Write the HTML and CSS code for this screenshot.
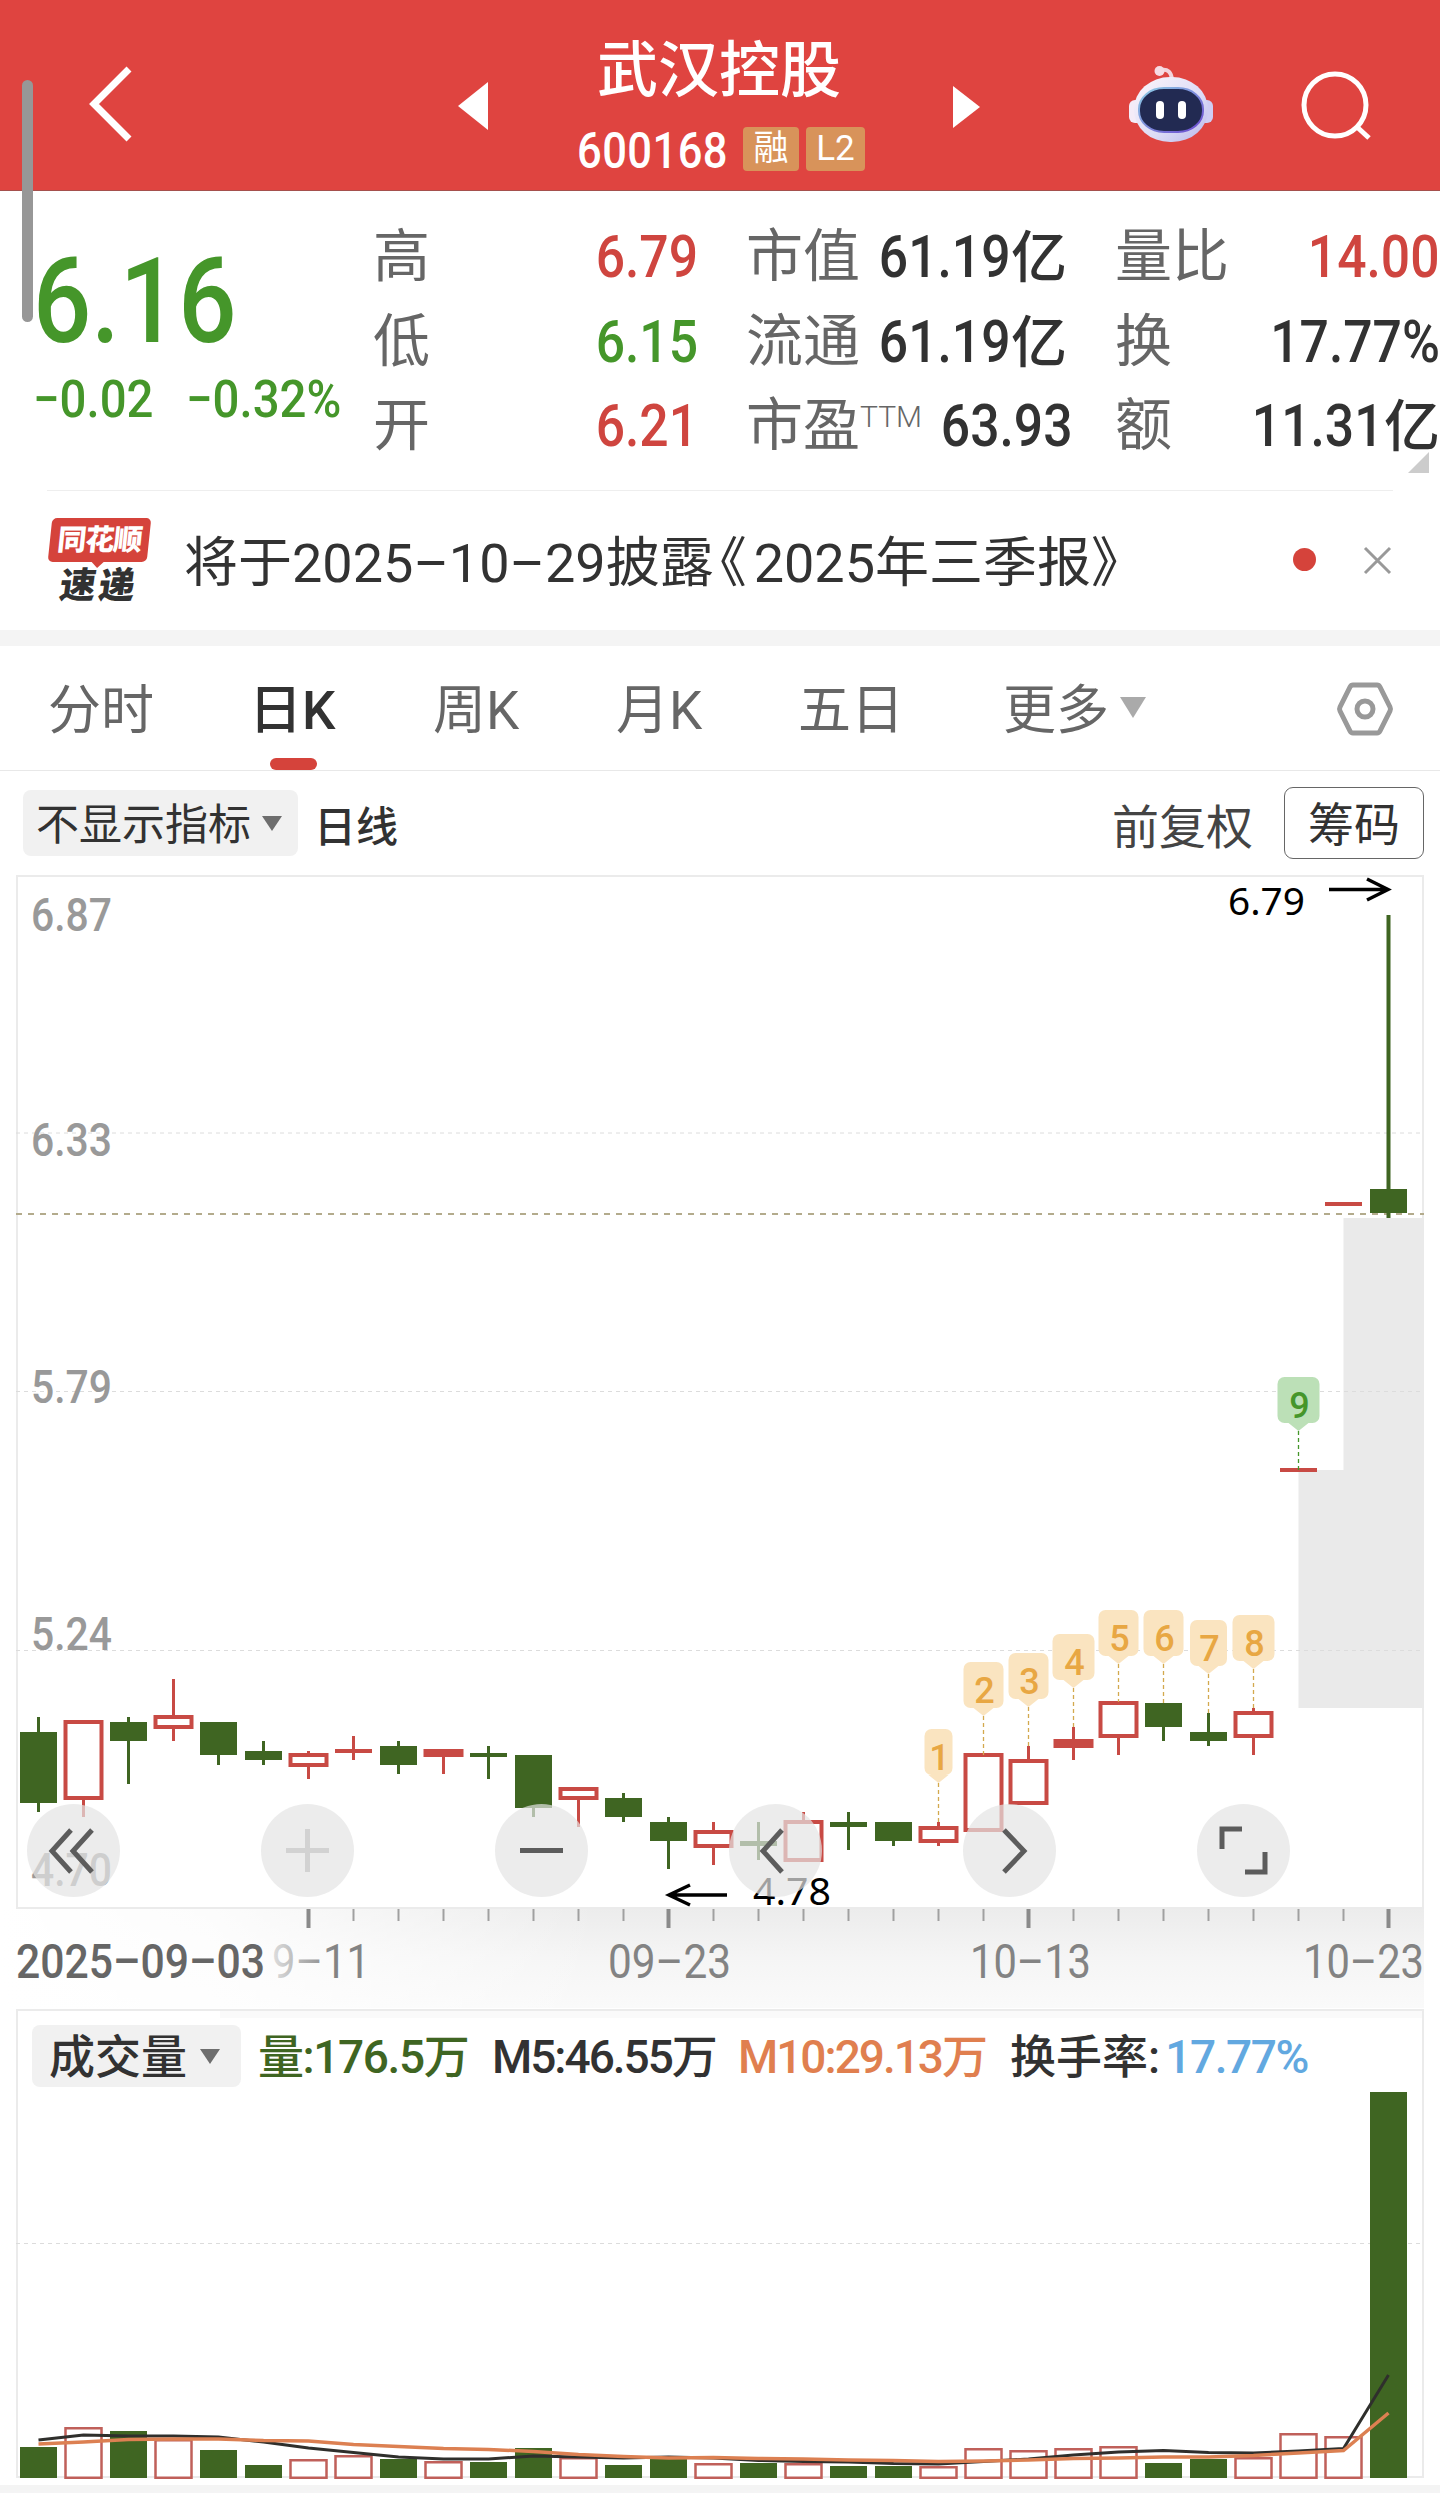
FILE: index.html
```html
<!DOCTYPE html>
<html lang="zh-CN">
<head>
  <meta charset="UTF-8">
  <meta name="viewport" content="width=device-width, initial-scale=1.0">
  <title>武汉控股 600168</title>
  <link rel="stylesheet" href="styles.css">
</head>
<body>
  <div class="scrollbar"></div>

  <header class="topbar">
    <svg class="back" width="60" height="86" viewBox="0 0 60 86"><path d="M49 8 L14 43 L49 78" fill="none" stroke="#fff" stroke-width="7"/></svg>
    <svg class="prev" width="32" height="50" viewBox="0 0 32 50"><path d="M31 1 V49 L1 25 Z" fill="#fff"/></svg>
    <div class="stock">
      <h1>武汉控股</h1>
      <div class="code-row">
        <span class="code">600168</span>
        <span class="badge">融</span>
        <span class="badge badge-l2">L2</span>
      </div>
    </div>
    <svg class="next" width="30" height="44" viewBox="0 0 30 44"><path d="M1 1 V43 L28 22 Z" fill="#fff"/></svg>
    <svg class="robot" width="86" height="80" viewBox="0 0 86 80">
      <defs>
        <linearGradient id="head" x1="0" y1="0" x2="1" y2="1">
          <stop offset="0" stop-color="#fdf6fb"/>
          <stop offset="0.6" stop-color="#dcdcf6"/>
          <stop offset="1" stop-color="#b9b6ea"/>
        </linearGradient>
        <linearGradient id="rim" x1="0" y1="0" x2="1" y2="1">
          <stop offset="0" stop-color="#8fd0e6"/>
          <stop offset="1" stop-color="#6a45cf"/>
        </linearGradient>
      </defs>
      <path d="M33 6 Q43 4 44 16" fill="none" stroke="#f3d3dc" stroke-width="4"/>
      <circle cx="31.500" cy="7" r="5" fill="#f6dbe3"/>
      <rect x="1" y="36" width="14" height="23" rx="6" fill="#f4ecf8"/>
      <rect x="71" y="36" width="14" height="23" rx="6" fill="#cfcdf3"/>
      <rect x="6" y="13" width="74" height="65" rx="36" ry="32" fill="url(#head)"/>
      <rect x="11" y="24" width="64" height="44" rx="25" ry="21" fill="#222a52" stroke="url(#rim)" stroke-width="2"/>
      <rect x="28" y="37" width="8" height="18" rx="4" fill="#fff"/>
      <rect x="50" y="37" width="8" height="18" rx="4" fill="#fff"/>
    </svg>
    <svg class="search" width="76" height="76" viewBox="0 0 76 76"><circle cx="36" cy="36" r="31" fill="none" stroke="#fff" stroke-width="5"/><path d="M58 58 L70 69" stroke="#fff" stroke-width="5"/></svg>
  </header>

  <section class="quote">
    <div class="price">
      <div class="last"><span>6.16</span></div>
      <div class="change"><span>−0.02</span><span>−0.32%</span></div>
    </div>
    <dl class="stats stats-a">
      <div><dt>高</dt><dd class="up"><span>6.79</span></dd></div>
      <div><dt>低</dt><dd class="down"><span>6.15</span></dd></div>
      <div><dt>开</dt><dd class="up"><span>6.21</span></dd></div>
    </dl>
    <dl class="stats stats-b">
      <div><dt>市值</dt><dd><span>61.19</span>亿</dd></div>
      <div><dt>流通</dt><dd><span>61.19</span>亿</dd></div>
      <div><dt>市盈<sup>TTM</sup></dt><dd class="plain"><span>63.93</span></dd></div>
    </dl>
    <dl class="stats stats-c">
      <div><dt>量比</dt><dd class="up"><span>14.00</span></dd></div>
      <div><dt>换</dt><dd><span>17.77%</span></dd></div>
      <div><dt>额</dt><dd><span>11.31</span>亿</dd></div>
    </dl>
    <div class="corner"></div>
  </section>

  <section class="news">
    <div class="news-logo">
      <div class="logo-top">同花顺</div>
      <div class="logo-bottom">速递</div>
    </div>
    <p>将于2025–10–29披露<span class="open-mark">《</span>2025年三季报》</p>
    <span class="dot"></span>
    <svg class="close" width="29" height="29" viewBox="0 0 29 29"><path d="M2 2 L27 27 M27 2 L2 27" stroke="#999" stroke-width="3"/></svg>
  </section>

  <nav class="tabs">
    <a>分时</a>
    <a class="active">日K</a>
    <a>周K</a>
    <a>月K</a>
    <a>五日</a>
    <a class="more">更多</a>
    <i class="caret caret-light"></i>
    <svg class="gear" width="58" height="56" viewBox="0 0 58 56"><path d="M17 4 H41 Q43 4 44 6 L54 26 Q55 28 54 30 L44 50 Q43 52 41 52 H17 Q15 52 14 50 L4 30 Q3 28 4 26 L14 6 Q15 4 17 4 Z" fill="none" stroke="#999" stroke-width="5"/><circle cx="29" cy="28" r="8" fill="none" stroke="#999" stroke-width="5"/></svg>
  </nav>

  <div class="toolbar">
    <div class="chip">不显示指标<i class="caret"></i></div>
    <b>日线</b>
    <span class="adjust">前复权</span>
    <button>筹码</button>
  </div>

  <svg id="kline" width="1440" height="1138" viewBox="0 870 1440 1138"></svg>

  <section class="volume">
    <div class="volume-head">
      <div class="chip">成交量<i class="caret"></i></div>
      <span class="v-now">量:176.5万</span>
      <span class="v-m5">M5:46.55万</span>
      <span class="v-m10">M10:29.13万</span>
      <span class="v-rate">换手率:<em>17.77%</em></span>
    </div>
    <svg id="volume" width="1440" height="477" viewBox="0 2008 1440 477"></svg>
  </section>

  <script src="script.js"></script>
</body>
</html>
```
FILE: styles.css
```css
* {
  box-sizing: border-box;
}
body {
  margin: 0;
  width: 1440px;
  height: 2493px;
  overflow: hidden;
  position: relative;
  background-color: #fff;
  color: #323232;
  font-family: Roboto, 'Noto Sans CJK SC', sans-serif;
}
svg {
  display: block;
  flex: none;
}
.scrollbar {
  position: absolute;
  left: 22px;
  top: 80px;
  width: 11px;
  height: 242px;
  border-radius: 6px;
  background-color: #979797;
  z-index: 2;
}

/* top bar */
.topbar {
  display: flex;
  align-items: flex-start;
  height: 191px;
  background-color: #df4440;
  border-bottom: 1px solid #a5504d;
  color: #fff;
}
.back {
  margin: 61px 0 0 80px;
}
.prev {
  margin: 81px 0 0 317px;
}
.stock {
  flex: none;
  width: 290px;
  margin: 34px 0 0 86px;
}
.stock h1 {
  margin: 0 0 0 22px;
  font-size: 61px;
  line-height: 74px;
  font-weight: 500;
  white-space: nowrap;
}
.code-row {
  display: flex;
  margin-top: 17px;
  height: 46px;
}
.code {
  flex: none;
  width: 166px;
  font-size: 50px;
  line-height: 53px;
  letter-spacing: 0.5px;
  transform: scaleX(0.87);
  transform-origin: left;
  white-space: nowrap;
  margin: 0 0 0 2px;
  font-weight: 500;
}
.badge {
  flex: none;
  width: 56px;
  height: 44px;
  margin: 2px 7px 0 0;
  border-radius: 4px;
  background-color: #d8935a;
  font-size: 35px;
  line-height: 44px;
  text-align: center;
}
.badge-l2 {
  width: 59px;
}
.next {
  margin: 85px 0 0 87px;
}
.robot {
  margin: 64px 0 0 146px;
}
.search {
  margin: 69px 0 0 85px;
}

/* quote */
.quote {
  position: relative;
  display: flex;
  height: 299px;
  padding-top: 24px;
}
.price {
  width: 373px;
  padding-left: 33px;
  color: #45962a;
  font-weight: 500;
}
.last {
  height: 150px;
  padding-top: 17px;
  font-size: 118px;
  line-height: 140px;
}
.change {
  display: flex;
  margin-top: 3px;
  font-size: 52px;
  line-height: 64px;
}
.change span {
  width: 153px;
}
.last span,
.change span {
  display: inline-block;
  transform: scaleX(0.91);
  transform-origin: left;
}
.last span {
  transform: scaleX(0.87);
}
.stats {
  margin: 0;
}
.stats div {
  display: flex;
  justify-content: space-between;
  height: 84.5px;
  line-height: 84px;
  white-space: nowrap;
}
.stats-a {
  width: 325px;
}
.stats-b {
  width: 321px;
  margin-left: 48px;
}
.stats-c {
  width: 325px;
  margin-left: 48px;
}
.stats dt {
  font-size: 57px;
  color: #666;
}
.stats sup {
  display: inline-block;
  vertical-align: 18px;
  margin-left: 0;
  font-size: 30px;
  line-height: 30px;
  font-weight: 300;
}
.stats dd {
  margin: 0;
  font-size: 56px;
  font-weight: 500;
}
.stats dd span {
  display: inline-block;
  font-size: 59px;
  transform: scaleX(0.875);
  transform-origin: right;
}
.stats .plain {
  padding-right: 4px;
}
.stats .up {
  color: #cf453f;
}
.stats .down {
  color: #45962a;
}
.corner {
  position: absolute;
  left: 1408px;
  top: 261px;
  border-left: 21px solid transparent;
  border-bottom: 21px solid #ccc;
}

/* news line */
.news {
  display: flex;
  align-items: flex-start;
  margin: 0 47px;
  border-top: 1px solid #eee;
  box-sizing: content-box;
  height: 139px;
}
.news-logo {
  flex: none;
  width: 103px;
  margin: 27px 0 0 2px;
}
.logo-top {
  position: relative;
  height: 44px;
  width: 99px;
  margin-left: 1px;
  color: #fff;
  font-size: 29px;
  line-height: 44px;
  font-weight: 900;
  letter-spacing: -1px;
  text-align: center;
  transform: skewX(-6deg);
  border-radius: 5px;
  background-color: #d5433b;
}
.logo-top::after {
  content: '';
  position: absolute;
  left: 43px;
  top: 43px;
  border: 7px solid transparent;
  border-top-color: #d5433b;
  border-bottom: 0;
}
.logo-bottom {
  padding-left: 11px;
  font-size: 36px;
  line-height: 48px;
  font-weight: 900;
  letter-spacing: 3px;
  transform: skewX(-8deg);
}
.news p {
  flex: none;
  width: 960px;
  margin: 31px 0 0 32px;
  font-size: 54px;
  line-height: 84px;
  white-space: nowrap;
}
.open-mark {
  margin: 0 7px 0 6px;
  font-feature-settings: 'halt';
}
.dot {
  flex: none;
  width: 23px;
  height: 23px;
  margin: 57px 0 0 149px;
  border-radius: 50%;
  background-color: #d5433b;
}
.close {
  margin: 55px 0 0 47px;
}

/* period tabs */
.tabs {
  display: flex;
  height: 141px;
  border-top: 16px solid #f4f4f4;
  border-bottom: 1px solid #e8e8e8;
  font-size: 53px;
  line-height: 130px;
  color: #666;
  white-space: nowrap;
}
.tabs a {
  position: relative;
  width: 183px;
}
.tabs a:first-child {
  margin-left: 48px;
  width: 201px;
}
.tabs .active {
  width: 184px;
  color: #323232;
  font-weight: 500;
}
.tabs .active::after {
  content: '';
  position: absolute;
  left: 21px;
  bottom: 0;
  width: 47px;
  height: 12px;
  border-radius: 6px;
  background-color: #d5433b;
}
.tabs a:nth-child(5) {
  width: 205px;
  margin-left: -1px;
}
.tabs .more {
  width: 117px;
}
.caret {
  display: inline-block;
  border: 10px solid transparent;
  border-top: 15px solid #6e6e6e;
  border-bottom: 0;
}
.caret-light {
  align-self: flex-start;
  margin-top: 51px;
  border-width: 21px 13px 0;
  border-top-color: #aaa;
}
.gear {
  margin: 35px 0 0 190px;
}

/* chart toolbar */
.toolbar {
  display: flex;
  align-items: flex-start;
  height: 99px;
  padding-left: 23px;
  white-space: nowrap;
}
.chip {
  flex: none;
  width: 275px;
  height: 66px;
  margin-top: 19px;
  padding-left: 13px;
  border-radius: 8px;
  background-color: #f1f1f1;
  font-size: 43px;
  line-height: 70px;
}
.chip .caret {
  margin-left: 11px;
  vertical-align: 9px;
}
.toolbar b {
  width: 798px;
  margin: 19px 0 0 16px;
  font-size: 42px;
  line-height: 76px;
  font-weight: 500;
}
.adjust {
  width: 150px;
  margin-top: 19px;
  font-size: 47px;
  line-height: 76px;
  color: #444;
}
.toolbar button {
  width: 140px;
  height: 72px;
  margin: 16px 0 0 22px;
  padding: 3px 0 0;
  border: 1.5px solid #666;
  border-radius: 9px;
  background-color: #fff;
  font-family: inherit;
  font-size: 46px;
  line-height: 60px;
  color: #323232;
}

/* charts */
.axis {
  font-size: 46px;
  font-weight: 500;
  fill: #999;
}
.mark {
  font-family: 'Noto Sans', sans-serif;
  font-size: 39px;
}
.date {
  font-size: 48px;
  fill: #838383;
}
.date-start {
  fill: #666;
  font-weight: 500;
}
.tag-text {
  font-size: 36px;
  font-weight: 500;
}
.volume {
  position: relative;
  height: 485px;
  border-bottom: 8px solid #f4f4f4;
}
.volume-head {
  position: absolute;
  left: 32px;
  top: 17px;
  display: flex;
  font-size: 46px;
  line-height: 64px;
  font-weight: 500;
  white-space: nowrap;
}
.volume-head .chip {
  width: 209px;
  height: 62px;
  margin: 0;
  padding-left: 17px;
  font-size: 46px;
  line-height: 64px;
}
.volume-head .chip .caret {
  margin-left: 13px;
}
.v-now {
  width: 215px;
  margin-left: 17px;
  letter-spacing: -1.4px;
  color: #3f6522;
}
.v-m5 {
  width: 247px;
  margin-left: 19px;
  letter-spacing: -2px;
}
.v-m10 {
  width: 264px;
  margin-left: -1px;
  letter-spacing: -2px;
  color: #e07f4f;
}
.v-rate {
  margin-left: 8px;
}
.v-rate em {
  margin-left: 5px;
  letter-spacing: -1.4px;
  font-style: normal;
  color: #62a8e0;
}
```
FILE: script.js
```js
const GREEN = '#3f6522';
const RED = '#c84a44';
const STEP = 45;
const X0 = 38.5;

// type, high, body top, body bottom, low, volume top
// g: falling, r: rising, f: rising with a thin body, l: single price
const days = [
  ['g', 1717, 1732, 1803, 1812, 2447],
  ['r', 1720, 1720, 1800, 1817, 2427],
  ['g', 1717, 1722, 1741, 1784, 2431],
  ['r', 1679, 1715, 1729, 1741, 2439],
  ['g', 1722, 1722, 1755, 1765, 2450],
  ['g', 1741, 1751, 1760, 1765, 2465],
  ['r', 1751, 1753, 1767, 1779, 2459],
  ['l', 1736, 1749, 1753, 1760, 2455],
  ['g', 1741, 1746, 1765, 1774, 2459],
  ['f', 1749, 1749, 1757, 1774, 2461],
  ['g', 1746, 1753, 1757, 1779, 2462],
  ['g', 1755, 1755, 1808, 1817, 2448],
  ['r', 1787, 1787, 1800, 1827, 2457],
  ['g', 1793, 1798, 1817, 1822, 2465],
  ['g', 1817, 1822, 1841, 1869, 2459],
  ['r', 1822, 1830, 1848, 1865, 2463],
  ['g', 1822, 1841, 1846, 1860, 2463],
  ['r', 1812, 1820, 1862, 1862, 2463],
  ['g', 1812, 1822, 1827, 1850, 2466],
  ['g', 1822, 1822, 1841, 1846, 2466],
  ['r', 1822, 1826, 1843, 1846, 2466],
  ['r', 1753, 1753, 1832, 1832, 2448],
  ['r', 1746, 1759, 1805, 1805, 2450],
  ['f', 1727, 1739, 1748, 1760, 2448],
  ['r', 1701, 1701, 1738, 1755, 2446],
  ['g', 1703, 1703, 1727, 1741, 2463],
  ['g', 1713, 1732, 1741, 1746, 2459],
  ['r', 1708, 1711, 1738, 1755, 2457],
  ['l', 1468, 1468, 1472, 1472, 2433],
  ['l', 1202, 1202, 1206, 1206, 2436],
  ['g', 915, 1189, 1213, 1218, 2092]
];

const ma5 = [2440, 2435, 2436, 2436, 2437, 2442, 2448, 2452.5, 2457, 2459, 2459, 2456, 2457, 2458, 2457, 2458,
  2460.5, 2461.5, 2462, 2463.5, 2464, 2461.5, 2459, 2455, 2452, 2450.5, 2452.5, 2453, 2451, 2448.5, 2375];
const ma10 = [2444, 2442, 2439.5, 2439, 2439, 2440.5, 2441, 2444.5, 2446.5, 2448.5, 2449.5, 2451.5, 2454.5, 2456.5,
  2458, 2457.5, 2458.5, 2459, 2460, 2460.5, 2461.5, 2461, 2460, 2458.5, 2458, 2457, 2457, 2455.5, 2453, 2450.5, 2413];

// day index, label, tag top, tag width, end of the dashed lead
const tags = [
  [20, 1, 1729, 28, 1822], [21, 2, 1662, 40, 1755], [22, 3, 1653, 40, 1746], [23, 4, 1634, 42, 1727],
  [24, 5, 1610, 40, 1702], [25, 6, 1610, 40, 1703], [26, 7, 1620, 37, 1713], [27, 8, 1615, 42, 1708],
  [28, 9, 1377, 42, 1470]
];

const cx = i => X0 + i * STEP;
const rect = (x, y, w, h, attrs) => `<rect x="${x}" y="${y}" width="${w}" height="${h}" ${attrs}/>`;
const line = (x1, y1, x2, y2, attrs) => `<line x1="${x1}" y1="${y1}" x2="${x2}" y2="${y2}" ${attrs}/>`;
const path = (d, attrs) => `<path d="${d}" fill="none" ${attrs}/>`;
const text = (x, y, w, cls, str, attrs = '') =>
  `<text x="${x}" y="${y}" class="${cls}" textLength="${w}" lengthAdjust="spacingAndGlyphs" ${attrs}>${str}</text>`;

function drawKline() {
  let s = `<defs>
    <linearGradient id="strip" x1="0" y1="0" x2="0" y2="1"><stop offset="0" stop-color="#ececec"/><stop offset="0.5" stop-color="#f5f5f5"/><stop offset="1" stop-color="#fafafa"/></linearGradient>
    <linearGradient id="stripFade" x1="0" y1="0" x2="1" y2="0"><stop offset="0" stop-color="#fff"/><stop offset="0.35" stop-color="#fff" stop-opacity="0.85"/><stop offset="1" stop-color="#fff" stop-opacity="0"/></linearGradient>
    <linearGradient id="dateFade" gradientUnits="userSpaceOnUse" x1="268" y1="0" x2="335" y2="0"><stop offset="0" stop-color="#838383" stop-opacity="0.2"/><stop offset="1" stop-color="#838383"/></linearGradient>
  </defs>`;

  // time strip under the chart
  s += rect(0, 1909, 1424, 99, 'fill="url(#strip)"');
  s += rect(0, 1909, 600, 99, 'fill="url(#stripFade)"');
  s += rect(17, 876, 1406, 1032, 'fill="#fff" stroke="#ebebeb" stroke-width="2"');

  // price gaps
  s += rect(1343.5, 1218, 80, 252, 'fill="#eaeaea"');
  s += rect(1298.5, 1470, 125, 238, 'fill="#eaeaea"');

  [1133, 1391.5, 1650.5].forEach(y => {
    s += line(16, y, 1424, y, 'stroke="#dcdcdc" stroke-width="1" stroke-dasharray="4 4"');
  });
  s += line(16, 1214, 1424, 1214, 'stroke="#b3ab8c" stroke-width="2" stroke-dasharray="6 6"');

  s += text(31, 931, 81, 'axis', '6.87');
  s += text(31, 1156, 81, 'axis', '6.33');
  s += text(31, 1403, 81, 'axis', '5.79');
  s += text(31, 1650, 81, 'axis', '5.24');
  s += text(31, 1886, 81, 'axis', '4.70');

  days.forEach(([type, high, top, bottom, low], i) => {
    const x = cx(i);
    const color = type === 'g' ? GREEN : RED;
    const wick = `stroke="${color}" stroke-width="${i === 30 ? 4 : 3}"`;
    s += line(x, high, x, top, wick) + line(x, bottom, x, low, wick);
    if (type === 'r') {
      s += rect(x - 18, top + 2, 36, bottom - top - 4, `fill="#fff" stroke="${RED}" stroke-width="4"`);
    } else {
      const half = type === 'f' ? 20 : 18.5;
      s += rect(x - half, top, half * 2, bottom - top, `fill="${color}"`);
    }
  });

  tags.forEach(([i, label, top, w, end]) => {
    const x = cx(i);
    const green = label === 9;
    const fill = green ? '#bce0b7' : '#fae4c0';
    s += line(x, top + 54, x, end, `stroke="${green ? '#45962a' : '#d3a94e'}" stroke-width="1.3" stroke-dasharray="4 3"`);
    s += rect(x - w / 2, top, w, 46, `rx="7" fill="${fill}"`);
    s += `<path d="M${x - 10} ${top + 46} L${x} ${top + 54} L${x + 10} ${top + 46} Z" fill="${fill}"/>`;
    s += `<text x="${x + 1}" y="${top + 41}" class="tag-text" text-anchor="middle" fill="${green ? '#45962a' : '#e8a743'}">${label}</text>`;
  });

  // highest and lowest price
  s += text(1228, 915, 77, 'mark', '6.79');
  s += path('M1329 889.5 H1387 M1367 879 L1388 889.5 L1367 900', 'stroke="#000" stroke-width="3.5"');
  s += text(753, 1905, 78, 'mark', '4.78');
  s += path('M727 1895 H670 M690 1885 L669 1895 L690 1905', 'stroke="#000" stroke-width="3.5"');

  for (let i = 6; i < 31; i++) {
    const big = i % 8 === 6;
    s += line(cx(i), 1909, cx(i), big ? 1928 : 1921, `stroke="${big ? '#8a8a8a' : '#a0a0a0'}" stroke-width="${big ? 4 : 2}"`);
  }
  s += text(16, 1978, 249, 'date date-start', '2025–09–03');
  s += text(272, 1978, 98, 'date', '9–11', 'style="fill:url(#dateFade)"');
  s += text(608, 1978, 123, 'date', '09–23');
  s += text(970, 1978, 121, 'date', '10–13');
  s += text(1303, 1978, 121, 'date', '10–23');

  // floating controls
  const icons = [
    'M71 1830 L52 1851 L71 1872 M92 1830 L73 1851 L92 1872',
    'M286 1850.500 H329 M307.500 1829 V1872',
    'M520 1850.500 H563',
    'M782 1830 L763 1851 L782 1872',
    'M1004 1830 L1024 1851 L1004 1872',
    'M1242 1829 H1222 V1849 M1245 1872 H1265 V1852'
  ];
  icons.forEach((d, i) => {
    s += `<circle cx="${73.5 + i * 234}" cy="1850.500" r="46.500" fill="#e4e4e4" fill-opacity="0.7"/>`;
    s += path(d, `stroke="${i === 1 ? '#d2d2d2' : '#5c5c5c'}" stroke-width="5"`);
  });

  document.getElementById('kline').innerHTML = s;
}

function drawVolume() {
  let s = rect(17, 2010, 1406, 467, 'fill="#fff" stroke="#ebebeb" stroke-width="2"');
  s += rect(220, 2011, 1202, 7, 'fill="#fafafa"');
  s += line(16, 2243.5, 1424, 2243.5, 'stroke="#dcdcdc" stroke-width="1" stroke-dasharray="4 4"');
  days.forEach((d, i) => {
    const x = cx(i);
    const top = d[5];
    s += d[0] === 'g'
      ? rect(x - 18.5, top, 37, 2478 - top, `fill="${GREEN}"`)
      : rect(x - 18, top + 1.25, 36, 2476.5 - top, 'fill="#fff" stroke="#c0605a" stroke-width="2.500"');
  });
  const points = arr => arr.map((y, i) => `${cx(i)},${y}`).join(' ');
  s += `<polyline points="${points(ma5)}" fill="none" stroke="#2f2f2c" stroke-width="3"/>`;
  s += `<polyline points="${points(ma10)}" fill="none" stroke="#dc8052" stroke-width="3.500"/>`;
  document.getElementById('volume').innerHTML = s;
}

drawKline();
drawVolume();
```
